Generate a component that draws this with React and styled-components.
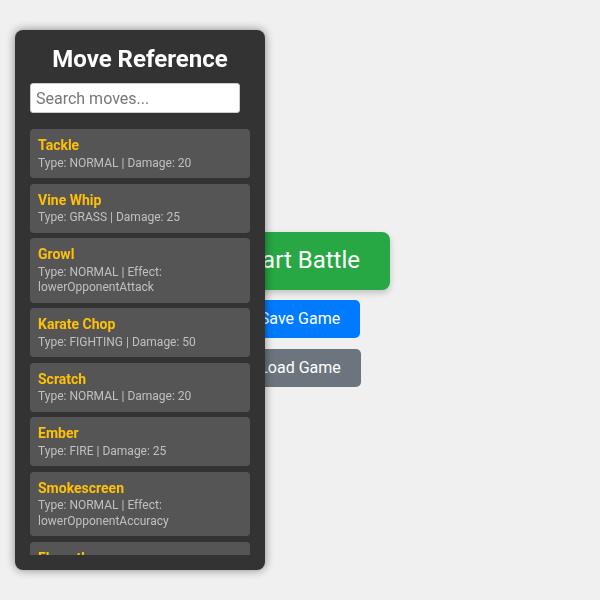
import React, { useState } from "react";
import styled, { createGlobalStyle } from "styled-components";

const GlobalStyle = createGlobalStyle`
  * { box-sizing: border-box; }
  body {
    margin: 0;
    background: #f0f0f1;
    font-family: Roboto, "Liberation Sans", sans-serif;
  }
`;

const moves = [
  { name: "Tackle", type: "NORMAL", damage: 20 },
  { name: "Vine Whip", type: "GRASS", damage: 25 },
  { name: "Growl", type: "NORMAL", effect: "lowerOpponentAttack" },
  { name: "Karate Chop", type: "FIGHTING", damage: 50 },
  { name: "Scratch", type: "NORMAL", damage: 20 },
  { name: "Ember", type: "FIRE", damage: 25 },
  { name: "Smokescreen", type: "NORMAL", effect: "lowerOpponentAccuracy" },
  { name: "Flamethrower", type: "FIRE", damage: 90 },
  { name: "Water Gun", type: "WATER", damage: 40 },
];

const Main = styled.div`
  min-height: 100vh;
  display: flex;
  flex-direction: column;
  align-items: center;
  padding-top: 232px;
`;

const Button = styled.button`
  border: none;
  color: #fff;
  font-family: inherit;
  cursor: pointer;
  background: ${(p) => p.$bg};
  font-size: ${(p) => (p.$big ? "24px" : "16px")};
  padding: ${(p) => (p.$big ? "15px 30px" : "10px 20px")};
  border-radius: ${(p) => (p.$big ? "8px" : "5px")};
  box-shadow: ${(p) => (p.$big ? "0 3px 6px rgba(0,0,0,0.2)" : "none")};
  line-height: 1.15;
  margin-bottom: ${(p) => (p.$big ? "10px" : "11px")};
`;

const Panel = styled.aside`
  position: fixed;
  left: 15px;
  top: 30px;
  width: 250px;
  height: 540px;
  background: #333;
  border-radius: 8px;
  box-shadow: 0 0 10px rgba(0, 0, 0, 0.45);
  padding: 15px;
  display: flex;
  flex-direction: column;
  z-index: 10;
`;

const Title = styled.h2`
  margin: 0 0 10px;
  color: #fff;
  font-size: 24px;
  font-weight: 700;
  line-height: 28px;
  text-align: center;
`;

const Search = styled.input`
  width: 210px;
  height: 30px;
  padding: 4px 5px;
  font-family: inherit;
  font-size: 16px;
  border: 1px solid #ccc;
  border-radius: 3px;
  margin-bottom: 16px;
  color: #333;
  &::placeholder { color: #777; }
`;

const List = styled.div`
  flex: 1;
  overflow: hidden;
  display: flex;
  flex-direction: column;
  gap: 5.5px;
  width: 220px;
`;

const Card = styled.div`
  flex-shrink: 0;
  background: #555;
  border-radius: 4px;
  padding: 8px 8px 7px;
`;

const MoveName = styled.div`
  color: #ffc107;
  font-weight: 700;
  font-size: 14px;
  line-height: 17px;
  margin-bottom: 1.5px;
`;

const MoveInfo = styled.div`
  color: #c0c0c0;
  font-size: 12px;
  line-height: 15.5px;
`;

export default function App() {
  const [query, setQuery] = useState("");
  const shown = moves.filter((m) =>
    m.name.toLowerCase().includes(query.toLowerCase())
  );

  return (
    <>
      <GlobalStyle />
      <Main>
        <Button $big $bg="#28a745">Start Battle</Button>
        <Button $bg="#007bff">Save Game</Button>
        <Button $bg="#6c757d">Load Game</Button>
      </Main>
      <Panel>
        <Title>Move Reference</Title>
        <Search
          placeholder="Search moves..."
          value={query}
          onChange={(e) => setQuery(e.target.value)}
        />
        <List>
          {shown.map((m) => (
            <Card key={m.name}>
              <MoveName>{m.name}</MoveName>
              <MoveInfo>
                Type: {m.type} |{" "}
                {m.effect ? `Effect: ${m.effect}` : `Damage: ${m.damage}`}
              </MoveInfo>
            </Card>
          ))}
        </List>
      </Panel>
    </>
  );
}
